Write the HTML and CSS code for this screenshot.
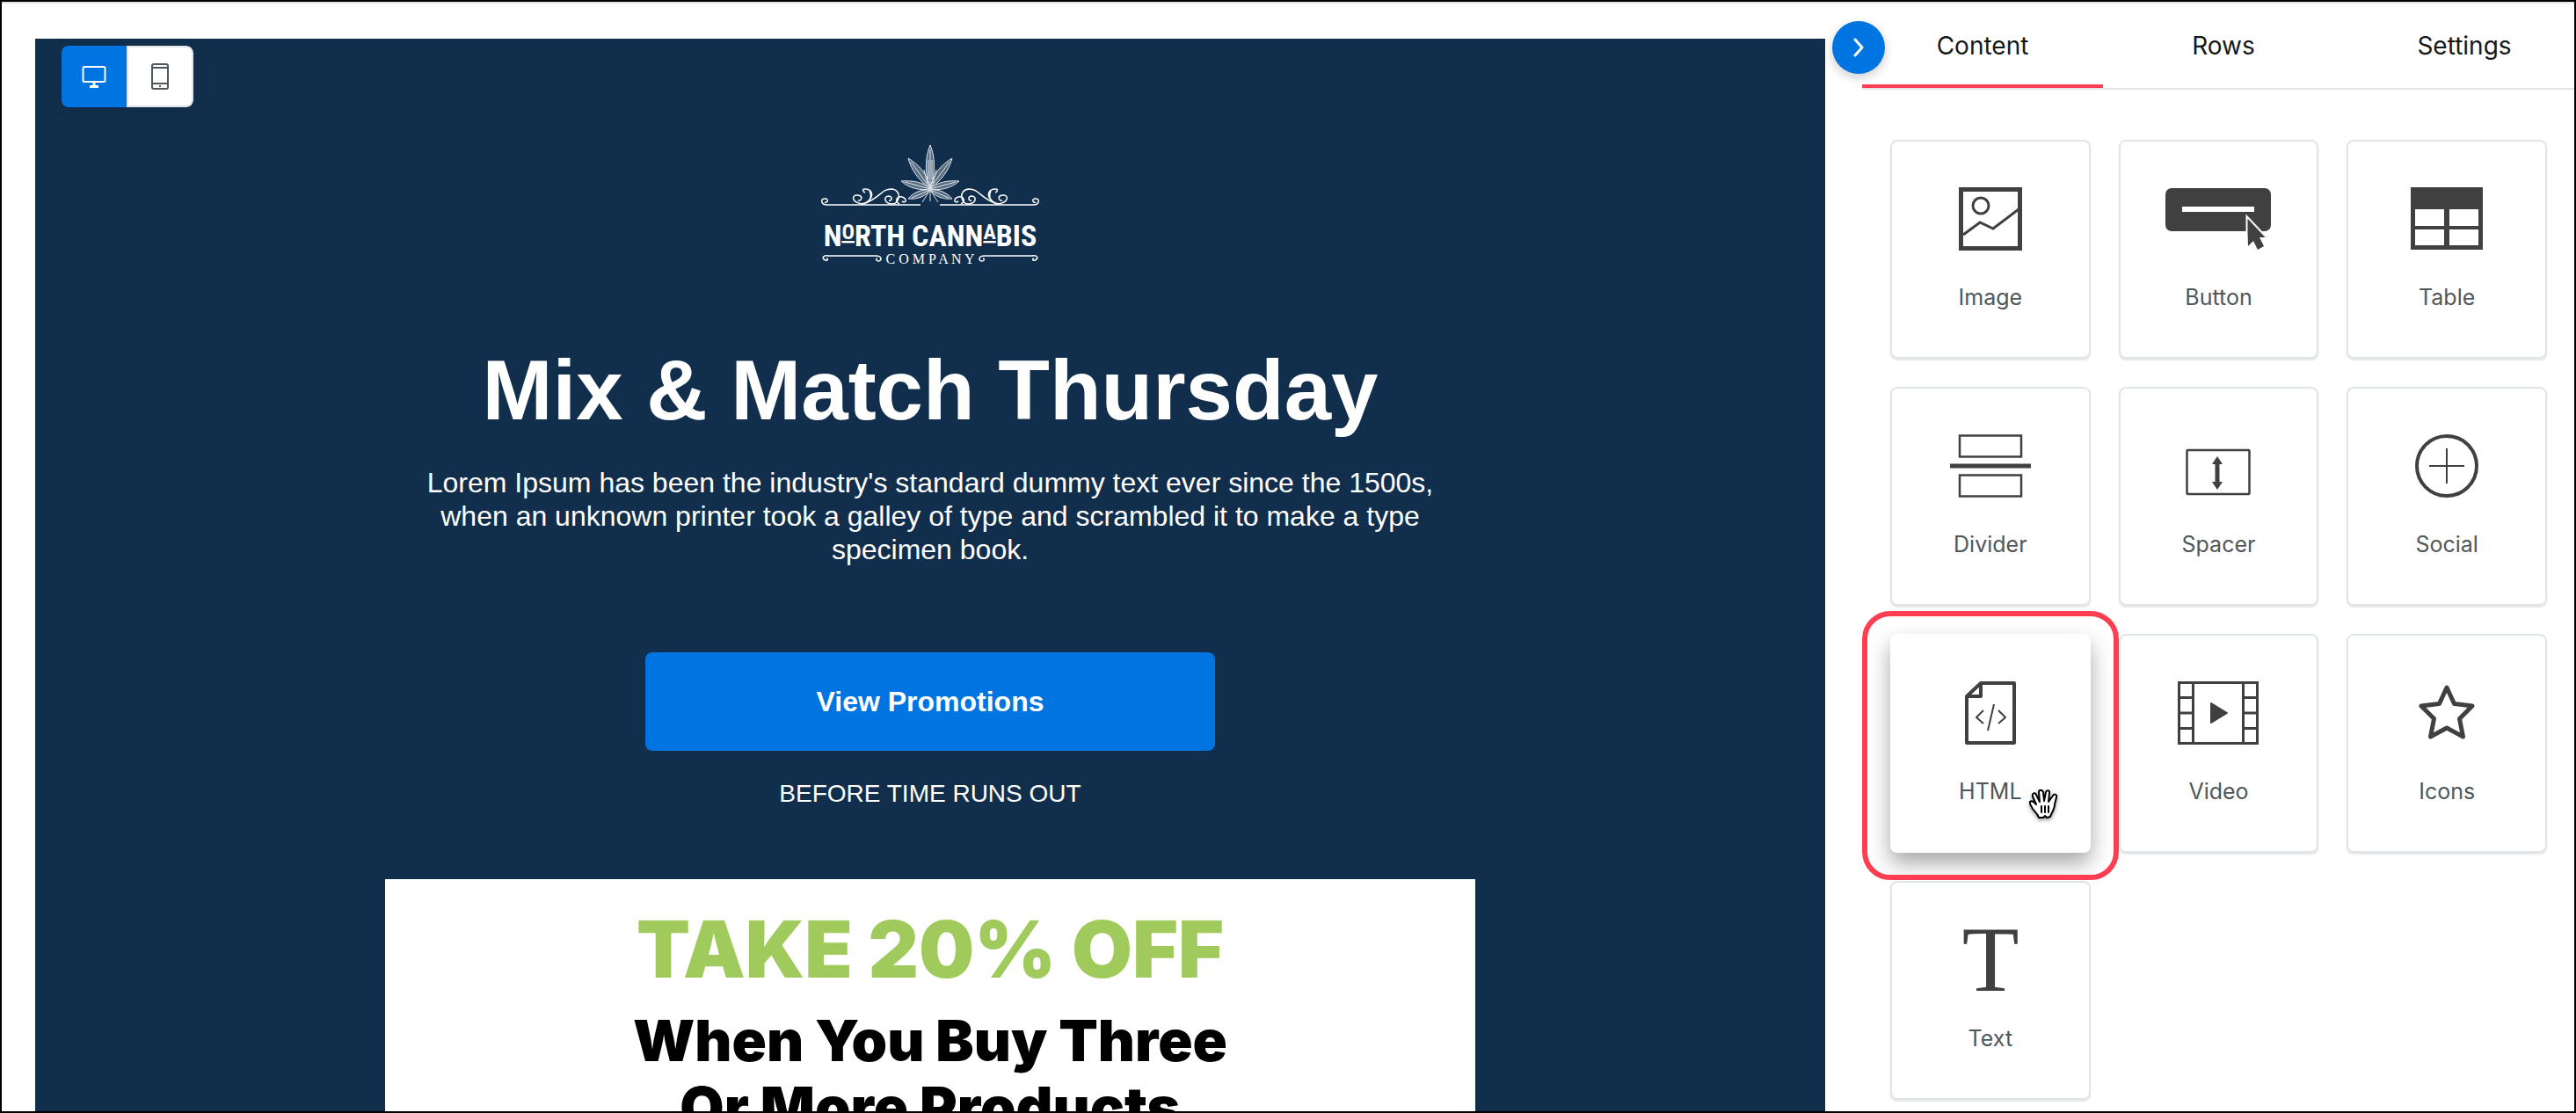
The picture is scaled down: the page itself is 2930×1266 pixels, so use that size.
FILE: index.html
```html
<!DOCTYPE html>
<html lang="en">
<head>
  <meta charset="UTF-8">
  <meta name="viewport" content="width=device-width, initial-scale=1.0">
  <title>Email Builder</title>
  <link rel="stylesheet" href="styles.css">
</head>
<body>
  <div class="builder">
    <main class="stage">
      <div class="email">
        <div class="device-toggle">
          <button class="device active" type="button" aria-label="Desktop">
            <svg width="28" height="26" viewBox="0 0 28 26" fill="none" stroke="#fff" stroke-width="2">
              <rect x="1.5" y="2" width="25" height="17" rx="1.5"/>
              <path d="M14 19v5M9 24.500h10" stroke-width="3"/>
            </svg>
          </button>
          <button class="device" type="button" aria-label="Mobile">
            <svg width="20" height="30" viewBox="0 0 20 30" fill="none" stroke="#50575b" stroke-width="2">
              <rect x="1" y="1" width="18" height="28" rx="2"/>
              <path d="M1 5h18M1 23h18M9 26h2"/>
            </svg>
          </button>
        </div>

        <svg class="logo" width="248" height="140" viewBox="0 0 248 140" role="img" aria-label="North Cannabis Company">
          <!-- leaf -->
          <g class="leaf">
            <path d="M124 50C117 33 119 12 124 1C129 12 131 33 124 50Z"/>
            <path d="M124 50C111 42 102 28 99 16C111 23 121 34 124 50Z"/>
            <path d="M124 50C137 42 146 28 149 16C137 23 127 34 124 50Z"/>
            <path d="M124 51C112 53 100 50 91 42C104 41 116 43 124 51Z"/>
            <path d="M124 51C136 53 148 50 157 42C144 41 132 43 124 51Z"/>
            <path d="M124 52C118 60 109 63 99 62C105 55 114 51 124 52Z"/>
            <path d="M124 52C130 60 139 63 149 62C143 55 134 51 124 52Z"/>
            <path d="M124 50V6M124 50L102 20M124 50L146 20M124 51L95 43M124 51L153 43M124 52L103 61M124 52L145 61M121 45l-4-16M127 45l4-16M122 40V18M126 40V18M124 52L115 66M124 52V65M124 52L133 66"/>
          </g>
          <!-- scrolls -->
          <g class="scroll" id="scroll">
            <path d="M113 69H7C-1 69-1 61 5 62C9 63 7 67 4 66"/>
            <path d="M48 68C34 67 34 57 42 58C48 59 46 65 42 64M46 68C61 65 61 50 49 51C47 51 47 54 50 55M48 68C68 61 68 51 80 51C93 52 89 69 80 68C71 67 71 59 77 59C82 60 80 65 77 64M89 68C83 65 86 59 92 60C98 62 97 68 92 65M50 67C58 63 57 57 55 53"/>
            <path d="M5 132C0 130 2 126 8 127H62C70 127 69 133 65 133C62 133 62 130 64 130M5 132C8 133 8 130 6 130"/>
          </g>
          <use href="#scroll" transform="translate(248 0) scale(-1 1)"/>
          <text class="logo-name" x="124" y="116">N<tspan class="logo-small" dy="-8">O</tspan><tspan dy="8">RTH CANN</tspan><tspan class="logo-small" dy="-8">A</tspan><tspan dy="8">BIS</tspan></text>
          <text class="logo-sub" x="124" y="136">C O M P A N Y</text>
        </svg>

        <h1 class="headline">Mix &amp; Match Thursday</h1>
        <p class="intro">Lorem Ipsum has been the industry's standard dummy text ever since the 1500s, when an unknown printer took a galley of type and scrambled it to make a type specimen book.</p>
        <button class="cta" type="button">View Promotions</button>
        <p class="note">BEFORE TIME RUNS OUT</p>

        <section class="promo">
          <h2 class="promo-title">TAKE 20% OFF</h2>
          <p class="promo-text">When You Buy Three<br>Or More Products</p>
        </section>
      </div>
    </main>

    <aside class="sidebar">
      <button class="collapse" type="button" aria-label="Collapse panel">
        <svg width="12" height="22" viewBox="0 0 12 22" fill="none" stroke="#fff" stroke-width="3" stroke-linecap="round" stroke-linejoin="round">
          <path d="M2 2l8 9L2 20"/>
        </svg>
      </button>
      <nav class="tabs">
        <button class="tab active" type="button">Content</button>
        <button class="tab" type="button">Rows</button>
        <button class="tab" type="button">Settings</button>
      </nav>

      <div class="blocks">
        <button class="block" type="button">
          <svg width="72" height="72" viewBox="0 0 72 72" fill="none" stroke="#404040" stroke-width="3">
            <rect x="2.5" y="2.500" width="67" height="67" stroke-width="5"/>
            <circle cx="25" cy="21" r="9"/>
            <path d="M5 54L24 40L39 47L68 25"/>
          </svg>
          <span>Image</span>
        </button>
        <button class="block" type="button">
          <svg width="120" height="72" viewBox="0 0 120 72">
            <rect y="1" width="120" height="49" rx="7" fill="#404040"/>
            <rect x="19" y="22" width="82" height="6" fill="#fff"/>
            <path d="M93 33L116 57H107L112 67L105 71L100 61L94 67Z" fill="#404040"/>
            <path d="M92.500 50V33L115 57" fill="none" stroke="#fff" stroke-width="2"/>
          </svg>
          <span>Button</span>
        </button>
        <button class="block" type="button">
          <svg width="82" height="72" viewBox="0 0 82 72">
            <rect width="82" height="71" fill="#404040"/>
            <path d="M5 25h33v19H5zM44 25h33v19H44zM5 48h33v18H5zM44 48h33v18H44z" fill="#fff"/>
          </svg>
          <span>Table</span>
        </button>
        <button class="block" type="button">
          <svg width="92" height="72" viewBox="0 0 92 72" fill="none" stroke="#404040" stroke-width="2.500">
            <rect x="11" y="1.500" width="70" height="24"/>
            <rect x="11" y="46.500" width="70" height="24"/>
            <path d="M0 36h92" stroke-width="5"/>
          </svg>
          <span>Divider</span>
        </button>
        <button class="block" type="button">
          <svg width="74" height="72" viewBox="0 0 74 72" fill="none" stroke="#404040" stroke-width="2.500">
            <rect x="1.500" y="18" width="71" height="50" rx="1"/>
            <path d="M36 31v26" stroke-width="5"/>
            <path d="M36 25l6 9H30zM36 63l6-9H30z" fill="#404040" stroke="none"/>
          </svg>
          <span>Spacer</span>
        </button>
        <button class="block" type="button">
          <svg width="72" height="72" viewBox="0 0 72 72" fill="none" stroke="#404040">
            <circle cx="36" cy="36" r="34" stroke-width="4"/>
            <path d="M36 16v40M16 36h40" stroke-width="2"/>
          </svg>
          <span>Social</span>
        </button>
        <button class="block dragging" type="button">
          <svg width="58" height="72" viewBox="0 0 58 72" fill="none" stroke="#404040" stroke-width="4" stroke-linejoin="round">
            <path d="M18 2H56V70H2V17ZM18 2V17H2"/>
            <path d="M21 33L13 41L21 48M38 33L46 41L38 48M33 26L26 56" stroke-width="2"/>
          </svg>
          <span>HTML</span>
          <svg class="hand" width="34" height="36" viewBox="0 0 34 36" fill="#fff" stroke="#000" stroke-width="2" stroke-linejoin="round" stroke-linecap="round">
            <path d="M12 33C11 29 8 27 5 23C3 19 1 17 2 15C4 13 6 15 9 18L5 9C4 5 8 4 9 7L13 15L12 4C12 1 16 1 17 4L18 14L20 4C21 1 25 2 24 5L23 15L28 8C30 5 33 7 32 10L30 18C30 24 26 28 25 32L21 33L19 31L17 33Z"/>
            <path d="M15 20v7M19 20v7M23 20v7"/>
          </svg>
        </button>
        <button class="block" type="button">
          <svg width="92" height="72" viewBox="0 0 92 72" fill="none" stroke="#404040" stroke-width="3">
            <rect x="1.500" y="1.500" width="89" height="69"/>
            <path d="M17.500 1v70M74.500 1v70M1 18.500h16M1 36h16M1 53.500h16M75 18.500h16M75 36h16M75 53.500h16"/>
            <path d="M38 25v22l18-11z" fill="#404040" stroke="#404040" stroke-width="2" stroke-linejoin="round"/>
          </svg>
          <span>Video</span>
        </button>
        <button class="block" type="button">
          <svg width="72" height="72" viewBox="0 0 72 72" fill="none" stroke="#404040" stroke-width="5" stroke-linejoin="round">
            <path d="M36 7L44.500 25.500L65 28L50.500 42.500L54.500 63L36 53L17.500 63L21.500 42.500L7 28L27.500 25.500Z"/>
          </svg>
          <span>Icons</span>
        </button>
        <button class="block" type="button">
          <svg class="letter-icon" width="72" height="72" viewBox="0 0 72 72" aria-hidden="true">
            <text class="letter" x="36" y="71">T</text>
          </svg>
          <span>Text</span>
        </button>
      </div>
    </aside>
  </div>
</body>
</html>
```
FILE: styles.css
```css
* {
  margin: 0;
  padding: 0;
  box-sizing: border-box;
}

body {
  background: #fff;
  font-family: "Liberation Sans", Arial, sans-serif;
}

button {
  border: 0;
  background: none;
  font: inherit;
  color: inherit;
  cursor: pointer;
}

.builder {
  height: 100vh;
  border: 2px solid #000;
  display: flex;
  overflow: hidden;
  box-shadow: inset 0 2px 0 #e1e5e8;
}

.stage {
  flex: 1;
  padding: 42px 0 0 38px;
}

.email {
  position: relative;
  display: flex;
  flex-direction: column;
  align-items: center;
  padding-top: 120px;
  background: #112f4c;
  color: #fff;
  text-align: center;
}

/* device switch */
.device-toggle {
  position: absolute;
  top: 8px;
  left: 30px;
  display: flex;
  height: 70px;
  border-radius: 8px;
  overflow: hidden;
  box-shadow: 0 0 16px rgba(0, 0, 0, 0.1);
}

.device {
  width: 76px;
  display: flex;
  align-items: center;
  justify-content: center;
  background: #fff;
  border: 2px solid #e1e5e8;
  border-radius: 0 8px 8px 0;
}

.device.active {
  width: 74px;
  background: #0075e1;
  border: 0;
  border-radius: 0;
}

/* logo */
.logo,
.letter-icon {
  overflow: visible;
}

.leaf {
  fill: rgba(255, 255, 255, 0.3);
  stroke: #dfe4e9;
  stroke-width: 1;
}

.scroll {
  fill: none;
  stroke: #fff;
  stroke-width: 1.5;
}

.logo-name {
  fill: #fff;
  font-family: "Roboto Condensed", "Liberation Sans Narrow", Roboto, sans-serif;
  font-size: 34px;
  font-weight: bold;
  text-anchor: middle;
}

.logo-small {
  font-size: 24px;
  text-decoration: underline;
}

.logo-sub {
  fill: #fff;
  font-family: "Liberation Serif", serif;
  font-size: 16px;
  text-anchor: middle;
}

/* email content */
.headline {
  margin-top: 82px;
  font-size: 96px;
  line-height: 116px;
}

.intro {
  max-width: 1200px;
  margin-top: 28px;
  font-size: 32px;
  line-height: 38px;
}

.cta {
  width: 648px;
  height: 112px;
  margin-top: 98px;
  border-radius: 8px;
  background: #0075e1;
  font-size: 32px;
  font-weight: bold;
}

.note {
  margin-top: 32px;
  font-size: 28px;
  line-height: 34px;
}

.promo {
  width: 1240px;
  margin-top: 80px;
  padding: 30px 0 60px;
  background: #fff;
  color: #000;
  font-family: Inter, sans-serif;
}

.promo-title {
  color: #a0ca5c;
  font-size: 89px;
  font-weight: 900;
  line-height: 100px;
}

.promo-text {
  margin-top: 16px;
  font-size: 65px;
  font-weight: 900;
  line-height: 76px;
}

/* right panel */
.sidebar {
  position: relative;
  width: 852px;
  padding-left: 42px;
  color: #50575b;
  font-family: Inter, sans-serif;
}

.collapse {
  position: absolute;
  top: 22px;
  left: 8px;
  width: 60px;
  height: 60px;
  display: flex;
  align-items: center;
  justify-content: center;
  border-radius: 50%;
  background: #0075e1;
  box-shadow: 0 4px 12px rgba(0, 0, 0, 0.2);
}

.tabs {
  display: flex;
  height: 100px;
  border-bottom: 2px solid #e1e5e8;
  overflow: hidden;
}

.tab {
  flex: 0 0 274px;
  padding-top: 6px;
  border-bottom: 4px solid transparent;
  color: #151819;
  font-size: 28px;
}

.tab.active {
  border-color: #ff3e51;
}

.blocks {
  display: grid;
  grid-template-columns: repeat(3, 1fr);
  gap: 32px;
  padding: 57px 31px 16px 32px;
}

.block {
  position: relative;
  height: 249px;
  padding-top: 52px;
  display: flex;
  flex-direction: column;
  align-items: center;
  border: 2px solid #e1e5e8;
  border-radius: 8px;
  background: #fff;
  box-shadow: 0 2px 2px rgba(0, 0, 0, 0.1);
}

.block span {
  margin-top: 37px;
  font-size: 25px;
  line-height: 32px;
}

.letter {
  fill: #404040;
  font-family: "Liberation Serif", serif;
  font-size: 106px;
  text-anchor: middle;
}

.block.dragging {
  border-color: #fff;
  box-shadow: 0 12px 24px rgba(0, 0, 0, 0.35);
}

/* highlight ring around the dragged block */
.block.dragging::after {
  content: "";
  position: absolute;
  inset: -28px -34px -33px;
  border: 6px solid #ff3e51;
  border-radius: 32px;
}

.hand {
  position: absolute;
  left: 155px;
  top: 174px;
  filter: drop-shadow(0 2px 2px rgba(0, 0, 0, 0.4));
}
```
